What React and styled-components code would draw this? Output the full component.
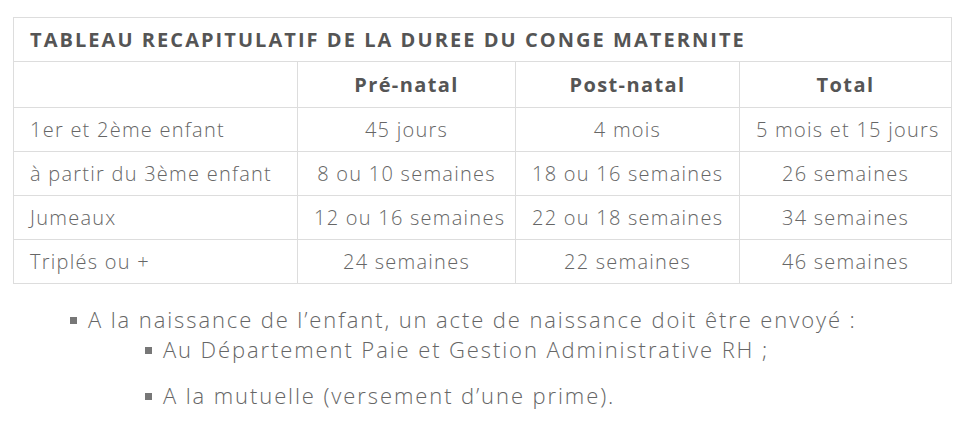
import React from "react";
import styled, { createGlobalStyle } from "styled-components";

const GlobalStyle = createGlobalStyle`
  body {
    margin: 0;
    background: #fff;
    font-family: "Open Sans", "Liberation Sans", sans-serif;
    color: #666;
  }
`;

const Page = styled.div`
  padding: 17px 26px 0 13px;
`;

const Table = styled.table`
  border-collapse: collapse;
  width: 938px;
  table-layout: fixed;
`;

const Cell = styled.td`
  border: 1px solid #ddd;
  height: 43px;
  padding: 0 16px;
  font-size: 20px;
  font-weight: 300;
  color: #666;
  letter-spacing: 1.25px;
  text-align: ${(p) => (p.$left ? "left" : "center")};
  white-space: nowrap;
`;

const TitleCell = styled.th`
  border: 1px solid #ddd;
  height: 43px;
  padding: 0 16px;
  font-size: 20px;
  font-weight: 700;
  color: #555;
  text-align: left;
  letter-spacing: 2.05px;
  white-space: nowrap;
`;

const HeadCell = styled.th`
  border: 1px solid #ddd;
  height: 43px;
  font-size: 20px;
  font-weight: 700;
  color: #555;
  letter-spacing: 1.4px;
  text-align: center;
`;

const List = styled.ul`
  list-style: none;
  margin: 20px 0 0;
  padding: 0 0 0 75px;
`;

const Item = styled.li`
  position: relative;
  font-size: 22px;
  font-weight: 300;
  color: #666;
  line-height: 30px;
  letter-spacing: 1.9px;
  margin-bottom: ${(p) => (p.$gap ? "16px" : "0")};
  &::before {
    content: "";
    position: absolute;
    left: -18px;
    top: 13px;
    width: 7px;
    height: 7px;
    background: #777;
  }
`;

const SubList = styled.ul`
  list-style: none;
  margin: 0;
  padding: 0 0 0 75px;
`;

const rows = [
  ["1er et 2ème enfant", "45 jours", "4 mois", "5 mois et 15 jours"],
  ["à partir du 3ème enfant", "8 ou 10 semaines", "18 ou 16 semaines", "26 semaines"],
  ["Jumeaux", "12 ou 16 semaines", "22 ou 18 semaines", "34 semaines"],
  ["Triplés ou +", "24 semaines", "22 semaines", "46 semaines"],
];

export default function App() {
  return (
    <Page>
      <GlobalStyle />
      <Table>
        <colgroup>
          <col style={{ width: 284 }} />
          <col style={{ width: 218 }} />
          <col style={{ width: 224 }} />
          <col style={{ width: 212 }} />
        </colgroup>
        <thead>
          <tr>
            <TitleCell colSpan={4}>TABLEAU RECAPITULATIF DE LA DUREE DU CONGE MATERNITE</TitleCell>
          </tr>
          <tr>
            <HeadCell />
            <HeadCell>Pré-natal</HeadCell>
            <HeadCell>Post-natal</HeadCell>
            <HeadCell>Total</HeadCell>
          </tr>
        </thead>
        <tbody>
          {rows.map((r) => (
            <tr key={r[0]}>
              <Cell $left>{r[0]}</Cell>
              <Cell>{r[1]}</Cell>
              <Cell>{r[2]}</Cell>
              <Cell>{r[3]}</Cell>
            </tr>
          ))}
        </tbody>
      </Table>
      <List>
        <Item>
          A la naissance de l’enfant, un acte de naissance doit être envoyé :
          <SubList>
            <Item $gap>Au Département Paie et Gestion Administrative RH ;</Item>
            <Item>A la mutuelle (versement d’une prime).</Item>
          </SubList>
        </Item>
      </List>
    </Page>
  );
}
